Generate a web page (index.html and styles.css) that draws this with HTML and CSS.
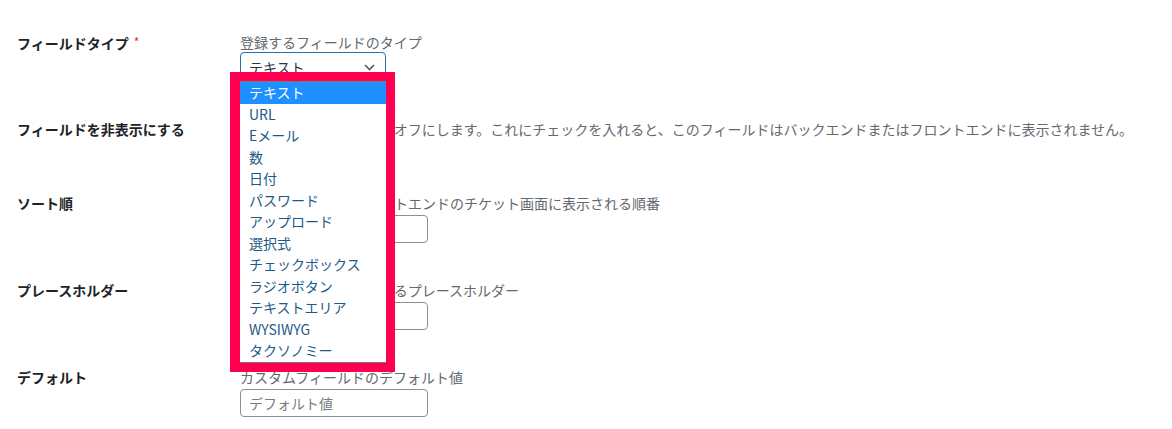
FILE: index.html
```html
<!DOCTYPE html>
<html lang="ja">
<head>
<meta charset="utf-8">
<title>フィールド設定</title>
<link rel="stylesheet" href="styles.css">
</head>
<body>
<div class="form">
  <div class="row row-type">
    <div class="label">フィールドタイプ<span class="req">*</span></div>
    <div class="field">
      <div class="desc">登録するフィールドのタイプ</div>
      <div class="select-wrap">
        <div class="select">
          <span>テキスト</span>
          <svg class="chev" width="11" height="7" viewBox="0 0 11 7"><polyline points="1,1 5.5,5.5 10,1" fill="none" stroke="#50575e" stroke-width="1.6"/></svg>
        </div>
        <div class="dropdown">
          <ul class="options">
            <li class="sel">テキスト</li>
            <li>URL</li>
            <li>Eメール</li>
            <li>数</li>
            <li>日付</li>
            <li>パスワード</li>
            <li>アップロード</li>
            <li>選択式</li>
            <li>チェックボックス</li>
            <li>ラジオボタン</li>
            <li>テキストエリア</li>
            <li>WYSIWYG</li>
            <li>タクソノミー</li>
          </ul>
        </div>
      </div>
    </div>
  </div>
  <div class="row row-hide">
    <div class="label">フィールドを非表示にする</div>
    <div class="field">
      <div class="desc">このフィールドの表示をオフにします。これにチェックを入れると、このフィールドはバックエンドまたはフロントエンドに表示されません。</div>
    </div>
  </div>
  <div class="row">
    <div class="label">ソート順</div>
    <div class="field">
      <div class="desc">バックエンド及びフロントエンドのチケット画面に表示される順番</div>
      <div class="input"></div>
    </div>
  </div>
  <div class="row">
    <div class="label">プレースホルダー</div>
    <div class="field">
      <div class="desc">フィールド内に表示されるプレースホルダー</div>
      <div class="input"></div>
    </div>
  </div>
  <div class="row">
    <div class="label">デフォルト</div>
    <div class="field">
      <div class="desc">カスタムフィールドのデフォルト値</div>
      <div class="input"><span class="ph">デフォルト値</span></div>
    </div>
  </div>
</div>
</body>
</html>
```
FILE: styles.css
```css
html, body {
  margin: 0;
  padding: 0;
  background: #ffffff;
}
body {
  font-family: "Noto Sans CJK JP", "Noto Sans", sans-serif;
  font-size: 14px;
  color: #1d2327;
}
.form {
  display: flex;
  flex-direction: column;
  gap: 37px;
  padding: 32px 0 0 17px;
}
.row {
  display: flex;
  align-items: flex-start;
}
.label {
  width: 223px;
  flex: none;
  font-weight: bold;
  line-height: 20px;
  color: #1d2327;
}
.req {
  color: #d63638;
  font-size: 12px;
  font-weight: normal;
  margin-left: 5px;
  vertical-align: 2px;
}
.field {
  display: flex;
  flex-direction: column;
}
.desc {
  line-height: 20px;
  color: #646970;
  white-space: nowrap;
}
.row-type .field { padding-bottom: 2px; }
.row-hide .field { padding-bottom: 17px; }
.select-wrap {
  position: relative;
  width: 146px;
}
.select {
  box-sizing: border-box;
  width: 146px;
  height: 28px;
  border: 1px solid #2271b1;
  border-radius: 4px;
  padding: 2px 8px 0;
  display: flex;
  align-items: center;
  justify-content: space-between;
  color: #2c3338;
  line-height: 24px;
}
.chev { margin-right: 2px; }
.dropdown {
  position: absolute;
  top: 20px;
  left: -10px;
  box-sizing: border-box;
  width: 165px;
  height: 300px;
  border-style: solid;
  border-color: #ff0050;
  border-width: 9px 9px 9px 10px;
  background: #ffffff;
}
.options {
  list-style: none;
  margin: 0;
  padding: 0;
  border-top: 1px solid #7a7a7a;
  border-bottom: 1px solid #7a7a7a;
  height: 280px;
}
.options li {
  height: 21.54px;
  line-height: 21.54px;
  padding-left: 9px;
  color: #1d5a87;
  white-space: nowrap;
}
.options li.sel {
  background: #1e90ff;
  color: #ffffff;
}
.input {
  box-sizing: border-box;
  width: 188px;
  height: 28px;
  margin-top: 2px;
  border: 1px solid #8c8f94;
  border-radius: 4px;
  padding: 0 8px;
  line-height: 26px;
}
.ph {
  color: #787c82;
}
```
